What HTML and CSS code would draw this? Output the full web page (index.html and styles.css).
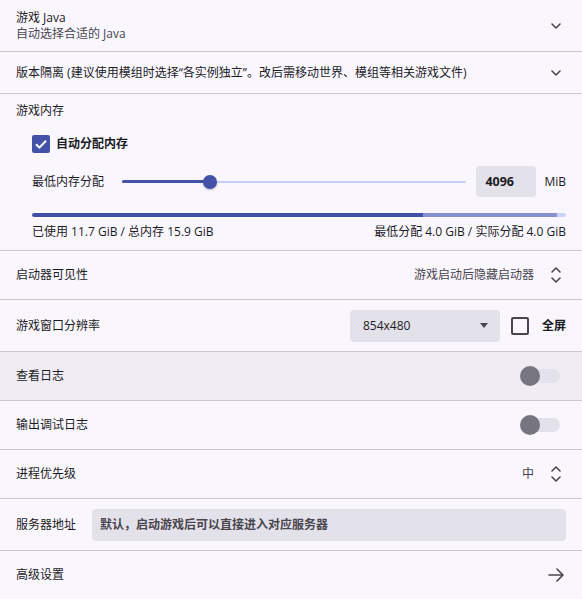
FILE: index.html
```html
<!DOCTYPE html>
<html lang="zh-CN">
<head>
<meta charset="utf-8">
<title>设置</title>
<link rel="stylesheet" href="styles.css">
</head>
<body>
<div class="list">
  <div class="row row-java">
    <div class="col">
      <div class="title">游戏 Java</div>
      <div class="sub">自动选择合适的 Java</div>
    </div>
    <svg class="icon" viewBox="0 0 20 20"><path d="M6 8 L10 12 L14 8"/></svg>
  </div>

  <div class="row row-iso">
    <div class="title grow">版本隔离 (建议使用模组时选择“各实例独立”。改后需移动世界、模组等相关游戏文件)</div>
    <svg class="icon" viewBox="0 0 20 20"><path d="M6 8 L10 12 L14 8"/></svg>
  </div>

  <div class="mem">
    <div class="title">游戏内存</div>
    <div class="auto">
      <span class="cb checked"><svg viewBox="0 0 18 18"><path d="M4 9.2 L7.4 12.6 L14 5.8"/></svg></span>
      <span class="bold">自动分配内存</span>
    </div>
    <div class="slider-row">
      <span class="title">最低内存分配</span>
      <div class="slider">
        <div class="track"></div>
        <div class="active" style="width: 88px"></div>
        <div class="thumb" style="left: 81px"></div>
      </div>
      <div class="num">4096</div>
      <span class="title unit">MiB</span>
    </div>
    <div class="bar">
      <div class="seg used" style="width: 391px"></div>
      <div class="seg alloc" style="width: 134px"></div>
      <div class="seg rest"></div>
    </div>
    <div class="bar-text">
      <span>已使用 11.7 GiB / 总内存 15.9 GiB</span>
      <span>最低分配 4.0 GiB / 实际分配 4.0 GiB</span>
    </div>
  </div>

  <div class="row row-48">
    <div class="title grow">启动器可见性</div>
    <span class="value">游戏启动后隐藏启动器</span>
    <svg class="icon" viewBox="0 0 20 20"><path d="M6 7 L10 3 L14 7 M6 13 L10 17 L14 13"/></svg>
  </div>

  <div class="row row-51">
    <div class="title grow">游戏窗口分辨率</div>
    <div class="select"><span>854x480</span><span class="tri"></span></div>
    <span class="cb outline"></span>
    <span class="bold full">全屏</span>
  </div>

  <div class="row row-48 hover">
    <div class="title grow">查看日志</div>
    <span class="switch"><span class="knob"></span></span>
  </div>

  <div class="row row-48">
    <div class="title grow">输出调试日志</div>
    <span class="switch"><span class="knob"></span></span>
  </div>

  <div class="row row-48">
    <div class="title grow">进程优先级</div>
    <span class="value">中</span>
    <svg class="icon" viewBox="0 0 20 20"><path d="M6 7 L10 3 L14 7 M6 13 L10 17 L14 13"/></svg>
  </div>

  <div class="row row-51">
    <div class="title">服务器地址</div>
    <div class="field">默认，启动游戏后可以直接进入对应服务器</div>
  </div>

  <div class="row row-48 last">
    <div class="title grow">高级设置</div>
    <svg class="icon" viewBox="0 0 20 20"><path d="M3 10 H17 M11 4 L17 10 L11 16"/></svg>
  </div>
</div>
</body>
</html>
```

FILE: styles.css
```css
html, body {
  margin: 0;
  padding: 0;
  background: #f9f7fd;
}
body {
  font-family: "Open Sans", "Noto Sans CJK SC", sans-serif;
  font-size: 12px;
  line-height: 16px;
  color: #1c1b1f;
}
.list {
  display: flex;
  flex-direction: column;
}
.row {
  display: flex;
  align-items: center;
  padding: 0 16px;
  border-bottom: 1px solid #cac8d0;
}
.row.last { border-bottom: none; }
.row-java { height: 51px; }
.row-iso { height: 41px; }
.row-48 { height: 48px; }
.row-51 { height: 51px; }
.hover { background: #efedf3; }
.col {
  display: flex;
  flex-direction: column;
  flex: 1;
}
.grow { flex: 1; }
.title { color: #1c1b1f; }
.sub { color: #49454f; }
.icon {
  width: 20px;
  height: 20px;
  flex: none;
  fill: none;
  stroke: #49454f;
  stroke-width: 1.6;
  stroke-linecap: round;
  stroke-linejoin: round;
}
.value {
  color: #49454f;
  margin-right: 12px;
}
.bold {
  font-weight: 700;
  color: #1c1b1f;
}

/* memory section */
.mem {
  display: flex;
  flex-direction: column;
  padding: 9px 16px 10px;
  border-bottom: 1px solid #cac8d0;
}
.auto {
  display: flex;
  align-items: center;
  gap: 6px;
  margin: 16px 0 0 16px;
  height: 18px;
}
.cb {
  width: 18px;
  height: 18px;
  box-sizing: border-box;
  border-radius: 2px;
  flex: none;
  display: block;
}
.cb.checked {
  background: #4352a8;
}
.cb.checked svg {
  width: 18px;
  height: 18px;
  display: block;
  fill: none;
  stroke: #ffffff;
  stroke-width: 2;
}
.cb.outline {
  border: 2px solid #49454f;
}
.slider-row {
  display: flex;
  align-items: center;
  margin: 13px 0 0 16px;
  height: 31px;
}
.slider {
  position: relative;
  flex: 1;
  height: 14px;
  margin: 0 10px 0 18px;
}
.slider .track {
  position: absolute;
  left: 0;
  right: 0;
  top: 6px;
  height: 2px;
  background: #c8cef6;
  border-radius: 1px;
}
.slider .active {
  position: absolute;
  left: 0;
  top: 5.5px;
  height: 3px;
  background: #4352a8;
  border-radius: 2px;
}
.slider .thumb {
  position: absolute;
  top: 0;
  width: 14px;
  height: 14px;
  border-radius: 50%;
  background: #4352a8;
  box-shadow: 0 1px 2px rgba(0,0,0,0.25);
}
.num {
  width: 60px;
  height: 31px;
  box-sizing: border-box;
  padding-left: 9px;
  background: #e3e1e9;
  border-radius: 4px;
  display: flex;
  align-items: center;
  font-weight: 700;
  font-size: 12.5px;
}
.unit {
  margin-left: 8px;
}
.bar {
  display: flex;
  margin: 16px 0 0 16px;
  height: 4px;
  border-radius: 2px;
  overflow: hidden;
}
.seg { height: 4px; }
.used { background: #4150a6; }
.alloc { background: #8990d0; }
.rest { flex: 1; background: #cdd2f8; }
.bar-text {
  display: flex;
  justify-content: space-between;
  margin: 7px 0 0 16px;
  color: #1c1b1f;
}

/* select row */
.select {
  width: 150px;
  height: 32px;
  box-sizing: border-box;
  background: #e3e1e9;
  border-radius: 4px;
  display: flex;
  align-items: center;
  justify-content: space-between;
  padding: 0 12px 0 13px;
  color: #1c1b1f;
  margin-right: 11px;
}
.tri {
  width: 0;
  height: 0;
  border-left: 4.5px solid transparent;
  border-right: 4.5px solid transparent;
  border-top: 5px solid #49454f;
}
.full { margin-left: 13px; }

/* switch */
.switch {
  position: relative;
  width: 38px;
  height: 14px;
  margin-right: 6px;
  border-radius: 7px;
  background: #e3e1e9;
  display: block;
}
.knob {
  position: absolute;
  left: -2px;
  top: -3px;
  width: 20px;
  height: 20px;
  border-radius: 50%;
  background: #77757f;
}

/* server field */
.field {
  flex: 1;
  height: 32px;
  margin-left: 16px;
  box-sizing: border-box;
  padding-left: 8px;
  background: #e3e1e9;
  border-radius: 4px;
  display: flex;
  align-items: center;
  color: #49454f;
  font-weight: 600;
}
```
